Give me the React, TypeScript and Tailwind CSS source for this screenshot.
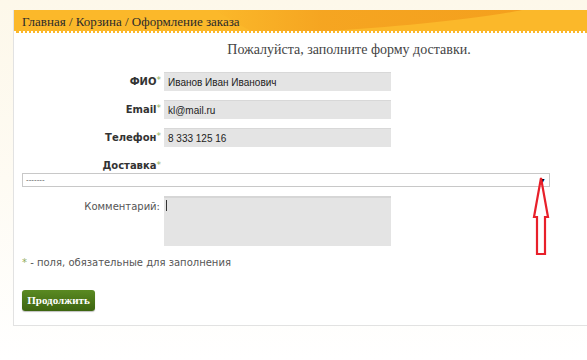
import React from 'react';

const serif = "font-['Liberation_Serif','DejaVu_Serif',serif]";
const verdana = "font-['DejaVu_Sans',sans-serif]";

const Star = () => <span className="text-[#8fae5a] font-normal text-[9px] align-top">*</span>;

const Field: React.FC<{ label: string; value: string }> = ({ label, value }) => (
  <div className="flex items-center h-[19px]">
    <label className={`w-[142px] pr-[3px] text-right text-[10px] font-bold text-[#333] ${verdana}`}>
      {label}
      <Star />
    </label>
    <div className="w-[227px] h-[19px] bg-[#e4e4e4] border-t border-[#d8d8d8] flex items-center px-[4px] text-[10px] text-[#222] font-['Liberation_Sans',sans-serif]">
      {value}
    </div>
  </div>
);

export default function App() {
  return (
    <div className="w-[587px] h-[360px] overflow-hidden bg-gradient-to-b from-[#fdf8ea] via-[#fefbf3] to-white pl-[13px] pt-[10px]">
      <div className="w-[600px] h-[316px] bg-white border-l border-b border-[#e2e2e2] flex flex-col relative">
        {/* Header */}
        <div className="relative h-[23px] overflow-hidden bg-[#fbb82a] border-b-2 border-dotted border-white">
          <svg className="absolute inset-0" width="600" height="23" viewBox="0 0 600 23">
            <defs>
              <linearGradient id="sw" x1="0" x2="1" y1="0" y2="0">
                <stop offset="0" stopColor="#f5a320" stopOpacity="0" />
                <stop offset="0.35" stopColor="#f5a320" stopOpacity="0.9" />
                <stop offset="1" stopColor="#f4a01d" stopOpacity="1" />
              </linearGradient>
            </defs>
            <path d="M200 0 L508 0 C 470 8, 380 18, 280 23 L 240 23 Z" fill="url(#sw)" />
          </svg>
          <div className={`relative pl-[8px] pt-[4px] text-[13px] leading-[15px] text-[#2a2a2a] ${serif}`}>
            Главная / Корзина / Оформление заказа
          </div>
        </div>

        <div className="px-[8px]">
          <h1 className={`text-center w-[574px] pl-[80px] mt-[9px] text-[14px] leading-[16px] text-[#444] ${serif}`}>
            Пожалуйста, заполните форму доставки.
          </h1>

          <div className="mt-[14px] flex flex-col gap-[9px]">
            <Field label="ФИО" value="Иванов Иван Иванович" />
            <Field label="Email" value="kl@mail.ru" />
            <Field label="Телефон" value="8 333 125 16" />
          </div>

          <div className={`mt-[12px] w-[142px] text-right pr-[3px] text-[10px] leading-[13px] font-bold text-[#333] ${verdana}`}>
            Доставка<Star />
          </div>
          <div className="mt-[1px] w-[528px] h-[14px] border border-[#c8c8c8] bg-white flex items-center justify-between px-[3px]">
            <span className="text-[8px] leading-none text-[#555] font-['Liberation_Sans',sans-serif]">-------</span>
            <span className="text-[7px] leading-none text-black">▼</span>
          </div>

          <div className="mt-[9px] flex">
            <label className={`w-[142px] pr-[4px] pt-[3px] text-right text-[10px] text-[#555] ${verdana}`}>
              Комментарий:
            </label>
            <div className="w-[227px] h-[50px] bg-[#e4e4e4] border-t-2 border-[#d6d6d6] pl-[2px] pt-[2px]">
              <div className="w-px h-[11px] bg-[#333]" />
            </div>
          </div>

          <p className={`mt-[10px] text-[10px] leading-[14px] text-[#555] ${verdana}`}>
            <span className="text-[#8fae5a]">*</span> - поля, обязательные для заполнения
          </p>

          <button
            className={`mt-[20px] w-[73px] h-[21px] rounded-[3px] bg-gradient-to-b from-[#5a8a22] to-[#3d6510] text-white text-[11px] font-bold shadow-[0_1px_1px_rgba(0,0,0,0.25)] ${serif}`}
          >
            Продолжить
          </button>
        </div>

        {/* red annotation arrow */}
        <svg className="absolute left-[514px] top-[165px]" width="24" height="82" viewBox="0 0 24 82">
          <path
            d="M13 3 L20 42 L17 42 L17 79 L9 79 L9 42 L6 42 Z"
            fill="none"
            stroke="#e8202a"
            strokeWidth="2.2"
            strokeLinejoin="miter"
          />
        </svg>
      </div>
    </div>
  );
}
